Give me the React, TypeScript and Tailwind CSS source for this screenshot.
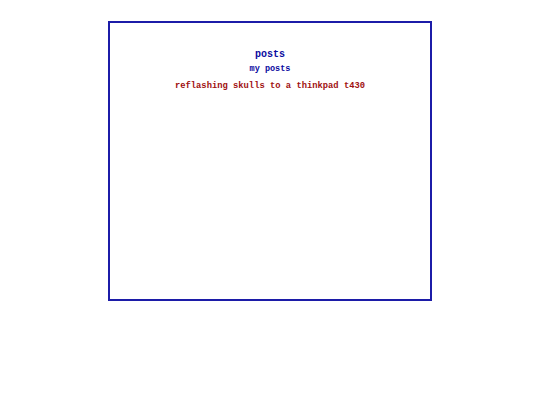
export default function App() {
  return (
    <div className="min-h-[405px] bg-white pt-[21px]" style={{ fontFamily: '"Liberation Mono", "DejaVu Sans Mono", monospace' }}>
      <div className="mx-auto flex h-[280px] w-[324px] flex-col items-center border-2 border-[#1c1ca8] bg-white">
        <h1 className="mt-[26px] text-[10px] font-bold leading-[12px] text-[#0a0aa0]">posts</h1>
        <a className="mt-[3px] text-[8.5px] font-bold leading-[10px] text-[#0a0aa0]">my posts</a>
        <a className="mt-[7px] text-[8.8px] font-bold leading-[10px] text-[#a01010]">
          reflashing skulls to a thinkpad t430
        </a>
      </div>
    </div>
  );
}
